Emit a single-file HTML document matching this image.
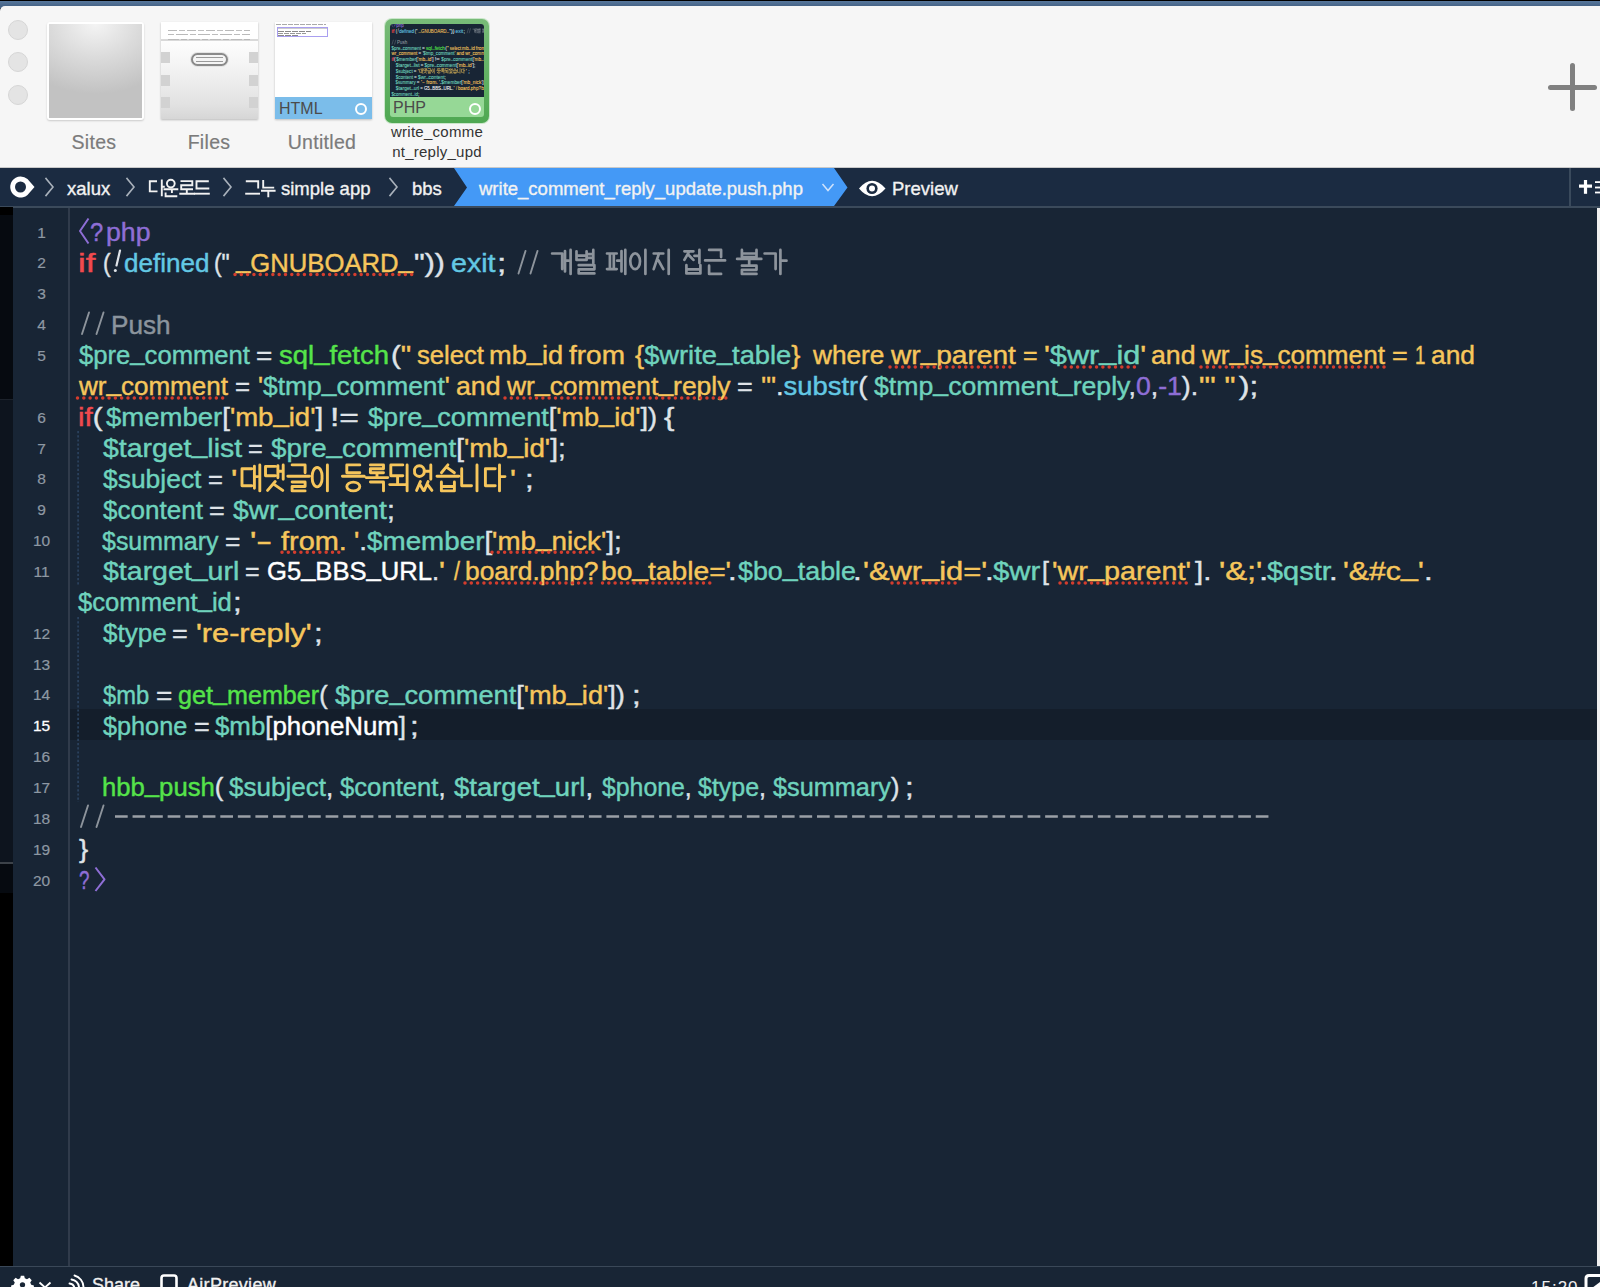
<!DOCTYPE html>
<html><head><meta charset="utf-8">
<style>
*{margin:0;padding:0;box-sizing:border-box}
html,body{width:1600px;height:1287px;overflow:hidden;background:#182535;font-family:"Liberation Sans",sans-serif}
.abs{position:absolute}
#wall{left:0;top:0;width:1600px;height:8px;background:linear-gradient(#000 0,#000 1px,#55759a 1.5px,#466487 6px)}
#tb{left:0;top:6px;width:1600px;height:162px;background:#f6f6f6;border-radius:5px 0 0 0;border-bottom:1px solid #c9c9c9}
.dot{width:20px;height:20px;border-radius:50%;background:#e4e4e4;border:1px solid #d6d6d6;left:8px}
.lbl{font-size:19.5px;color:#7b7b7b;-webkit-text-stroke:0.2px #7b7b7b;text-align:center;width:120px;line-height:22px;margin-top:2px;letter-spacing:0.3px}
#bc{left:0;top:168px;width:1600px;height:38px;background:#1b2b41}
#bcline{left:0;top:206px;width:1600px;height:1.5px;background:#3b4a5b}
.bct{color:#f2f2f2;font-size:18.5px;top:177.5px;white-space:nowrap;-webkit-text-stroke:0.35px #f2f2f2}
.chev{top:177px}
#left{left:0;top:207px;width:13px;height:1059px;background:#060a10}
#gut{left:13px;top:207.5px;width:56px;height:1059px;background:#182535}
#gline{left:68.3px;top:207.5px;width:1.7px;height:1059px;background:#303b4b}
#code{left:70px;top:207.5px;width:1527px;height:1059px;background:#182535}
#cur{left:70px;top:709px;width:1527px;height:31px;background:#141e2b}
#rstrip{left:1597px;top:208px;width:3px;height:1058px;background:#f0f0f0}
.ln{width:56px;text-align:center;left:13.5px;font-size:15.5px;color:#8a939e;line-height:15px;-webkit-text-stroke:0.2px currentColor}
.row{white-space:pre;font-size:25px;line-height:30px;transform-origin:0 50%;-webkit-text-stroke:0.42px currentColor}
.row span{-webkit-text-stroke:0.42px currentColor}
.us{font-style:normal;position:relative;top:-4px}
#sb{left:0;top:1266px;width:1600px;height:21px;background:#182535;border-top:1.5px solid #3a4858}
.pu{color:#8e6ed6}.rd{color:#f04a4e}.cy{color:#63c8e4}.yl{color:#f6c65c}.wh{color:#dfe3e8}
.gy{color:#8b949d}.tl{color:#6fd3bd}.gr{color:#55e34a}.bw{color:#ffffff}
</style></head><body>
<div id="wall" class="abs"></div>
<div id="tb" class="abs"></div>
<div class="abs dot" style="top:20px"></div>
<div class="abs dot" style="top:52px"></div>
<div class="abs dot" style="top:85px"></div>

<!-- Sites thumb -->
<div class="abs" style="left:47px;top:22px;width:97px;height:98px;background:#fff;border-radius:3px;box-shadow:0 1px 2px rgba(0,0,0,.18)"></div>
<div class="abs" style="left:49px;top:24px;width:93px;height:94px;background:radial-gradient(ellipse 90px 70px at 50% 0%,#f4f4f4 0%,#dadada 50%,#c2c2c2 100%)"></div>
<div class="abs lbl" style="left:34px;top:129px">Sites</div>
<!-- Files thumb -->
<div class="abs" style="left:161px;top:22px;width:97px;height:97px;background:linear-gradient(#fdfdfd 20%,#f4f4f4 45%,#e2e2e2 85%,#d6d6d6);box-shadow:0 1px 2px rgba(0,0,0,.25)"></div>
<div class="abs" style="left:161px;top:22px;width:97px;height:19px;background:#fff;border-bottom:2px solid #d9d9d9"></div>
<div class="abs" style="left:168px;top:29.5px;width:82px;height:1.3px;opacity:.8;background:repeating-linear-gradient(90deg,#a8a8a8 0 9px,transparent 9px 11px,#b0b0b0 11px 17px,transparent 17px 19px)"></div>
<div class="abs" style="left:168px;top:34px;width:82px;height:1.3px;opacity:.8;background:repeating-linear-gradient(90deg,#acacac 0 6px,transparent 6px 8px,#a8a8a8 8px 20px,transparent 20px 22px)"></div>
<div class="abs" style="left:168px;top:38.5px;width:82px;height:1.3px;opacity:.8;background:repeating-linear-gradient(90deg,#b4b4b4 0 11px,transparent 11px 13px,#b0b0b0 13px 19px,transparent 19px 21px)"></div>
<div class="abs" style="left:161px;top:52px;width:9px;height:11px;background:#d2d2d2"></div>
<div class="abs" style="left:161px;top:75px;width:9px;height:11px;background:#d2d2d2"></div>
<div class="abs" style="left:161px;top:97px;width:9px;height:11px;background:#d2d2d2"></div>
<div class="abs" style="left:249px;top:52px;width:9px;height:11px;background:#d2d2d2"></div>
<div class="abs" style="left:249px;top:75px;width:9px;height:11px;background:#d2d2d2"></div>
<div class="abs" style="left:249px;top:97px;width:9px;height:11px;background:#d2d2d2"></div>
<div class="abs" style="left:191px;top:53px;width:37px;height:13px;border-radius:7px;border:2px solid #8a8a8a;background:#f4f4f4;box-shadow:0 0 0 1px #e4e4e4"></div>
<div class="abs" style="left:196px;top:57px;width:27px;height:1px;background:#9a9a9a"></div>
<div class="abs" style="left:196px;top:61px;width:27px;height:1px;background:#9a9a9a"></div>
<div class="abs lbl" style="left:149px;top:129px">Files</div>
<!-- Untitled thumb -->
<div class="abs" style="left:275px;top:22px;width:97px;height:97px;background:#fff;box-shadow:0 1px 2px rgba(0,0,0,.22)"></div>
<div class="abs" style="left:276px;top:24px;width:50px;height:1px;background:repeating-linear-gradient(90deg,#aaa 0 5px,transparent 5px 6px)"></div>
<div class="abs" style="left:277px;top:27px;width:51px;height:10px;border:1px solid #a99ff0"></div>
<div class="abs" style="left:278px;top:28px;width:49px;height:1px;background:#ccc"></div>
<div class="abs" style="left:278px;top:30.5px;width:33px;height:1px;background:repeating-linear-gradient(90deg,#888 0 6px,transparent 6px 7px)"></div>
<div class="abs" style="left:278px;top:32.5px;width:28px;height:1px;background:repeating-linear-gradient(90deg,#999 0 5px,transparent 5px 6px)"></div>
<div class="abs" style="left:278px;top:34.5px;width:20px;height:1px;background:repeating-linear-gradient(90deg,#888 0 6px,transparent 6px 7px)"></div>
<div class="abs" style="left:275px;top:97px;width:97px;height:22px;background:#7bbdea"></div>
<div class="abs" style="left:279px;top:100px;font-size:16px;color:#4b4b4b;line-height:18px">HTML</div>
<div class="abs" style="left:355px;top:103px;width:12px;height:12px;border-radius:50%;border:2px solid #fff"></div>
<div class="abs lbl" style="left:262px;top:129px">Untitled</div>
<!-- PHP thumb -->
<div class="abs" style="left:384px;top:18px;width:106px;height:106px;border-radius:8px;background:rgba(120,200,120,.35)"></div>
<div class="abs" style="left:385px;top:19px;width:104px;height:104px;border-radius:7px;background:linear-gradient(#78bb78,#4fa852)"></div>
<div class="abs" style="left:390px;top:24px;width:94px;height:93px;border-radius:3px;background:#96d896;overflow:hidden">
  <div class="abs" style="left:0;top:0;width:94px;height:73px;background:#182535;overflow:hidden"><div class="abs" style="left:-12px;top:-41.9px;width:1600px;height:800px;transform:scale(0.172,0.186);transform-origin:0 0"><div class="abs row" style="left:89.65px;top:216.9px;transform:scaleX(0.9500)"><span class="pu">?</span></div>
<div class="abs row" style="left:106.43px;top:216.9px;transform:scaleX(1.0676)"><span class="pu">php</span></div>
<div class="abs row" style="left:77.62px;top:247.8px;transform:scaleX(1.3848)"><span class="rd">if</span></div>
<div class="abs row" style="left:103.09px;top:247.8px;transform:scaleX(0.9125)"><span class="wh">(</span></div>
<div class="abs row" style="left:124.46px;top:247.8px;transform:scaleX(1.0422)"><span class="cy">defined</span></div>
<div class="abs row" style="left:214.09px;top:247.8px;transform:scaleX(0.9135)"><span class="wh">(&quot;</span></div>
<div class="abs row" style="left:236.03px;top:247.8px;transform:scaleX(1.0266)"><span class="yl"><i class=us>_</i>GNUBOARD<i class=us>_</i></span></div>
<div class="abs row" style="left:413.79px;top:247.8px;transform:scaleX(1.2069)"><span class="wh">&quot;))</span></div>
<div class="abs row" style="left:451.35px;top:247.8px;transform:scaleX(1.1460)"><span class="cy">exit</span></div>
<div class="abs row" style="left:497.33px;top:247.8px;transform:scaleX(1.3333)"><span class="wh">;</span></div>
<div class="abs row" style="left:110.91px;top:309.5px;transform:scaleX(1.0448)"><span class="gy">Push</span></div>
<div class="abs row" style="left:79.00px;top:340.4px;transform:scaleX(1.0252)"><span class="tl">$pre<i class=us>_</i>comment</span></div>
<div class="abs row" style="left:256.38px;top:340.4px;transform:scaleX(1.1154)"><span class="wh">=</span></div>
<div class="abs row" style="left:279.00px;top:340.4px;transform:scaleX(1.0993)"><span class="gr">sql<i class=us>_</i>fetch</span></div>
<div class="abs row" style="left:390.83px;top:340.4px;transform:scaleX(1.1745)"><span class="wh">(</span><span class="yl">&quot;</span></div>
<div class="abs row" style="left:417.00px;top:340.4px;transform:scaleX(1.0251)"><span class="yl">select</span></div>
<div class="abs row" style="left:488.91px;top:340.4px;transform:scaleX(1.0878)"><span class="yl">mb<i class=us>_</i>id</span></div>
<div class="abs row" style="left:569.00px;top:340.4px;transform:scaleX(1.1185)"><span class="yl">from</span></div>
<div class="abs row" style="left:635.00px;top:340.4px;transform:scaleX(1.0916)"><span class="yl">{</span><span class="tl">$write<i class=us>_</i>table</span><span class="yl">}</span></div>
<div class="abs row" style="left:812.55px;top:340.4px;transform:scaleX(1.0486)"><span class="yl">where</span></div>
<div class="abs row" style="left:891.12px;top:340.4px;transform:scaleX(1.1228)"><span class="yl">wr<i class=us>_</i>parent</span></div>
<div class="abs row" style="left:1023.00px;top:340.4px;transform:scaleX(1.0000)"><span class="yl">=</span></div>
<div class="abs row" style="left:1043.77px;top:340.4px;transform:scaleX(1.2282)"><span class="yl">&#x27;</span><span class="tl">$wr<i class=us>_</i>id</span><span class="yl">&#x27;</span></div>
<div class="abs row" style="left:1151.43px;top:340.4px;transform:scaleX(1.0676)"><span class="yl">and</span></div>
<div class="abs row" style="left:1202.04px;top:340.4px;transform:scaleX(1.0448)"><span class="yl">wr<i class=us>_</i>is<i class=us>_</i>comment</span></div>
<div class="abs row" style="left:1391.92px;top:340.4px;transform:scaleX(1.0769)"><span class="yl">=</span></div>
<div class="abs row" style="left:1415.25px;top:340.4px;transform:scaleX(0.7500)"><span class="yl">1</span></div>
<div class="abs row" style="left:1430.94px;top:340.4px;transform:scaleX(1.0551)"><span class="yl">and</span></div>
<div class="abs row" style="left:79.04px;top:371.2px;transform:scaleX(1.0406)"><span class="yl">wr<i class=us>_</i>comment</span></div>
<div class="abs row" style="left:234.57px;top:371.2px;transform:scaleX(1.0308)"><span class="wh">=</span></div>
<div class="abs row" style="left:257.94px;top:371.2px;transform:scaleX(1.0552)"><span class="yl">&#x27;</span><span class="tl">$tmp<i class=us>_</i>comment</span><span class="yl">&#x27;</span></div>
<div class="abs row" style="left:456.43px;top:371.2px;transform:scaleX(1.0676)"><span class="yl">and</span></div>
<div class="abs row" style="left:507.06px;top:371.2px;transform:scaleX(1.0579)"><span class="yl">wr<i class=us>_</i>comment<i class=us>_</i>reply</span></div>
<div class="abs row" style="left:736.92px;top:371.2px;transform:scaleX(1.0769)"><span class="wh">=</span></div>
<div class="abs row" style="left:760.90px;top:371.2px;transform:scaleX(1.0965)"><span class="yl">&#x27;&quot;</span><span class="wh">.</span><span class="cy">substr</span><span class="wh">(</span></div>
<div class="abs row" style="left:874.00px;top:371.2px;transform:scaleX(1.0667)"><span class="tl">$tmp<i class=us>_</i>comment<i class=us>_</i>reply</span><span class="wh">,</span><span class="pu">0</span><span class="wh">,</span><span class="pu">-1</span><span class="wh">).</span></div>
<div class="abs row" style="left:1198.77px;top:371.2px;transform:scaleX(1.2322)"><span class="yl">&quot;&#x27; &quot;</span></div>
<div class="abs row" style="left:1238.97px;top:371.2px;transform:scaleX(1.2500)"><span class="wh">);</span></div>
<div class="abs row" style="left:77.83px;top:402.1px;transform:scaleX(1.1707)"><span class="rd">if</span><span class="wh">(</span></div>
<div class="abs row" style="left:106.00px;top:402.1px;transform:scaleX(1.1011)"><span class="tl">$member</span><span class="wh">[</span><span class="yl">&#x27;mb<i class=us>_</i>id&#x27;</span><span class="wh">]</span></div>
<div class="abs row" style="left:329.81px;top:402.1px;transform:scaleX(1.3459)"><span class="wh">!=</span></div>
<div class="abs row" style="left:367.50px;top:402.1px;transform:scaleX(1.0838)"><span class="tl">$pre<i class=us>_</i>comment</span><span class="wh">[</span><span class="yl">&#x27;mb<i class=us>_</i>id&#x27;</span><span class="wh">])</span></div>
<div class="abs row" style="left:664.00px;top:402.1px;transform:scaleX(1.2500)"><span class="wh">{</span></div>
<div class="abs row" style="left:102.50px;top:433.0px;transform:scaleX(1.1370)"><span class="tl">$target<i class=us>_</i>list</span></div>
<div class="abs row" style="left:248.39px;top:433.0px;transform:scaleX(1.0077)"><span class="wh">=</span></div>
<div class="abs row" style="left:270.60px;top:433.0px;transform:scaleX(1.1106)"><span class="tl">$pre<i class=us>_</i>comment</span><span class="wh">[</span><span class="yl">&#x27;mb<i class=us>_</i>id&#x27;</span><span class="wh">];</span></div>
<div class="abs row" style="left:102.50px;top:463.8px;transform:scaleX(1.0572)"><span class="tl">$subject</span></div>
<div class="abs row" style="left:207.73px;top:463.8px;transform:scaleX(1.0192)"><span class="wh">=</span></div>
<div class="abs row" style="left:230.67px;top:463.8px;transform:scaleX(1.3333)"><span class="yl">&#x27;</span></div>
<div class="abs row" style="left:509.88px;top:463.8px;transform:scaleX(1.2500)"><span class="yl">&#x27;</span></div>
<div class="abs row" style="left:525.12px;top:463.8px;transform:scaleX(1.2500)"><span class="wh">;</span></div>
<div class="abs row" style="left:102.50px;top:494.7px;transform:scaleX(1.0420)"><span class="tl">$content</span></div>
<div class="abs row" style="left:208.92px;top:494.7px;transform:scaleX(1.0769)"><span class="wh">=</span></div>
<div class="abs row" style="left:232.50px;top:494.7px;transform:scaleX(1.1297)"><span class="tl">$wr<i class=us>_</i>content</span><span class="wh">;</span></div>
<div class="abs row" style="left:102.00px;top:525.5px;transform:scaleX(0.9984)"><span class="tl">$summary</span></div>
<div class="abs row" style="left:224.75px;top:525.5px;transform:scaleX(1.0538)"><span class="wh">=</span></div>
<div class="abs row" style="left:249.67px;top:525.5px;transform:scaleX(1.3333)"><span class="yl">&#x27;</span></div>
<div class="abs row" style="left:256.46px;top:525.5px;transform:scaleX(1.9429)"><span class="yl">-</span></div>
<div class="abs row" style="left:280.80px;top:525.5px;transform:scaleX(1.1564)"><span class="yl">from.</span></div>
<div class="abs row" style="left:353.59px;top:525.5px;transform:scaleX(1.1113)"><span class="yl">&#x27;</span><span class="wh">.</span><span class="tl">$member</span><span class="wh">[</span><span class="yl">&#x27;mb<i class=us>_</i>nick&#x27;</span><span class="wh">];</span></div>
<div class="abs row" style="left:102.50px;top:556.4px;transform:scaleX(1.1402)"><span class="tl">$target<i class=us>_</i>url</span></div>
<div class="abs row" style="left:245.00px;top:556.4px;transform:scaleX(1.0000)"><span class="wh">=</span></div>
<div class="abs row" style="left:266.98px;top:556.4px;transform:scaleX(1.0230)"><span class="bw">G5<i class=us>_</i>BBS<i class=us>_</i>URL</span><span class="wh">.</span></div>
<div class="abs row" style="left:439.38px;top:556.4px;transform:scaleX(1.2500)"><span class="yl">&#x27;</span></div>
<div class="abs row" style="left:454.00px;top:556.4px;transform:scaleX(0.8571)"><span class="yl">/</span></div>
<div class="abs row" style="left:464.94px;top:556.4px;transform:scaleX(1.0554)"><span class="yl">board.php?</span></div>
<div class="abs row" style="left:600.87px;top:556.4px;transform:scaleX(1.1275)"><span class="yl">bo<i class=us>_</i>table=&#x27;</span></div>
<div class="abs row" style="left:728.12px;top:556.4px;transform:scaleX(1.2500)"><span class="wh">.</span></div>
<div class="abs row" style="left:738.00px;top:556.4px;transform:scaleX(1.0742)"><span class="tl">$bo<i class=us>_</i>table</span></div>
<div class="abs row" style="left:853.12px;top:556.4px;transform:scaleX(1.2500)"><span class="wh">.</span></div>
<div class="abs row" style="left:862.77px;top:556.4px;transform:scaleX(1.2350)"><span class="yl">&#x27;&amp;wr<i class=us>_</i>id=&#x27;</span></div>
<div class="abs row" style="left:985.12px;top:556.4px;transform:scaleX(1.2500)"><span class="wh">.</span></div>
<div class="abs row" style="left:993.00px;top:556.4px;transform:scaleX(1.1762)"><span class="tl">$wr</span></div>
<div class="abs row" style="left:1042.00px;top:556.4px;transform:scaleX(1.0000)"><span class="wh">[</span></div>
<div class="abs row" style="left:1051.85px;top:556.4px;transform:scaleX(1.1518)"><span class="yl">&#x27;wr<i class=us>_</i>parent&#x27;</span></div>
<div class="abs row" style="left:1195.00px;top:556.4px;transform:scaleX(1.1720)"><span class="wh">].</span></div>
<div class="abs row" style="left:1218.69px;top:556.4px;transform:scaleX(1.3060)"><span class="yl">&#x27;&amp;;&#x27;</span></div>
<div class="abs row" style="left:1259.33px;top:556.4px;transform:scaleX(1.3333)"><span class="wh">.</span></div>
<div class="abs row" style="left:1267.00px;top:556.4px;transform:scaleX(1.1583)"><span class="tl">$qstr</span></div>
<div class="abs row" style="left:1329.12px;top:556.4px;transform:scaleX(1.2500)"><span class="wh">.</span></div>
<div class="abs row" style="left:1342.79px;top:556.4px;transform:scaleX(1.2123)"><span class="yl">&#x27;&amp;#c<i class=us>_</i>&#x27;</span></div>
<div class="abs row" style="left:1424.12px;top:556.4px;transform:scaleX(1.2500)"><span class="wh">.</span></div>
<div class="abs row" style="left:78.40px;top:587.3px;transform:scaleX(1.0250)"><span class="tl">$comment<i class=us>_</i>id</span></div>
<div class="abs row" style="left:232.62px;top:587.3px;transform:scaleX(1.2500)"><span class="wh">;</span></div><svg class="abs" style="left:0;top:0" width="1600" height="1287" viewBox="0 0 1600 1287"><path d="M78.1 431V586M78.1 617V802" fill="none" stroke="#2c4461" stroke-width="1.6" stroke-dasharray="2.2 2"/><path d="M88.5 218.5 L80 231 L88.5 243.5 M95.5 867.5 L104.5 879.3 L95.5 891" fill="none" stroke="#8e6ed6" stroke-width="2" stroke-linejoin="round"/><path d="M525.5 251 L518.5 273.5 M537.5 251 L530.5 273.5 M89 312.5 L82 334 M103.5 312.5 L96.5 334 M88 805.5 L81 827 M103.5 805.5 L96.5 827" fill="none" stroke="#8d949c" stroke-width="1.9" stroke-linecap="round"/><path d="M120 250.5 L116.5 265.5" fill="none" stroke="#dfe3e8" stroke-width="2.2" stroke-linecap="round"/><circle cx="115.3" cy="270.5" r="1.5" fill="#dfe3e8"/><path d="M115.00 816.6h12.7M132.55 816.6h12.7M150.10 816.6h12.7M167.65 816.6h12.7M185.20 816.6h12.7M202.75 816.6h12.7M220.30 816.6h12.7M237.85 816.6h12.7M255.40 816.6h12.7M272.95 816.6h12.7M290.50 816.6h12.7M308.05 816.6h12.7M325.60 816.6h12.7M343.15 816.6h12.7M360.70 816.6h12.7M378.25 816.6h12.7M395.80 816.6h12.7M413.35 816.6h12.7M430.90 816.6h12.7M448.45 816.6h12.7M466.00 816.6h12.7M483.55 816.6h12.7M501.10 816.6h12.7M518.65 816.6h12.7M536.20 816.6h12.7M553.75 816.6h12.7M571.30 816.6h12.7M588.85 816.6h12.7M606.40 816.6h12.7M623.95 816.6h12.7M641.50 816.6h12.7M659.05 816.6h12.7M676.60 816.6h12.7M694.15 816.6h12.7M711.70 816.6h12.7M729.25 816.6h12.7M746.80 816.6h12.7M764.35 816.6h12.7M781.90 816.6h12.7M799.45 816.6h12.7M817.00 816.6h12.7M834.55 816.6h12.7M852.10 816.6h12.7M869.65 816.6h12.7M887.20 816.6h12.7M904.75 816.6h12.7M922.30 816.6h12.7M939.85 816.6h12.7M957.40 816.6h12.7M974.95 816.6h12.7M992.50 816.6h12.7M1010.05 816.6h12.7M1027.60 816.6h12.7M1045.15 816.6h12.7M1062.70 816.6h12.7M1080.25 816.6h12.7M1097.80 816.6h12.7M1115.35 816.6h12.7M1132.90 816.6h12.7M1150.45 816.6h12.7M1168.00 816.6h12.7M1185.55 816.6h12.7M1203.10 816.6h12.7M1220.65 816.6h12.7M1238.20 816.6h12.7M1255.75 816.6h12.7" stroke="#9aa0a6" stroke-width="2.5" fill="none"/><path d="M552.1 253.5 L562.2 253.5 L562.2 269.1M565.0 251.1 L565.0 271.5M565.0 260.7 L568.4 260.7M570.6 249.9 L570.6 273.9M576.5 251.3 L576.5 259.9 L586.6 259.9 L586.6 251.3M576.5 255.6 L586.6 255.6M593.3 249.9 L593.3 263.1M587.7 254.1 L593.3 254.1M587.7 257.8 L593.3 257.8M578.7 265.2 L594.4 265.2 L594.4 269.3 L578.7 269.3 L578.7 273.4 L594.4 273.4" fill="none" stroke="#8d949c" stroke-width="2.7" stroke-linecap="round" stroke-linejoin="round"/><path d="M607.0 253.5 L616.7 253.5M607.0 269.1 L616.7 269.1M609.9 253.5 L609.9 269.1M613.8 253.5 L613.8 269.1M621.5 251.1 L621.5 271.5M617.2 260.7 L621.5 260.7M625.3 249.9 L625.3 273.9M630.3 261.3A4.8 7.8 0 1 0 640.0 261.3A4.8 7.8 0 1 0 630.3 261.3M645.4 249.9 L645.4 273.9M653.7 253.5 L663.3 253.5M659.0 253.5 L653.7 269.1M658.5 260.5 L663.3 269.1M668.7 249.9 L668.7 273.9" fill="none" stroke="#8d949c" stroke-width="2.7" stroke-linecap="round" stroke-linejoin="round"/><path d="M684.4 251.3 L693.4 251.3M689.3 251.3 L684.4 259.9M688.9 255.2 L693.4 259.9M699.4 249.9 L699.4 263.1M694.4 255.8 L699.4 255.8M686.4 265.2 L686.4 273.4 L700.4 273.4 L700.4 265.2M686.4 269.3 L700.4 269.3M709.1 249.9 L721.1 249.9 L721.1 257.1M705.1 260.4 L725.1 260.4M709.1 265.7 L709.1 273.9 L721.1 273.9" fill="none" stroke="#8d949c" stroke-width="2.7" stroke-linecap="round" stroke-linejoin="round"/><path d="M741.9 249.9 L741.9 257.1 L756.5 257.1 L756.5 249.9M741.9 253.5 L756.5 253.5M737.1 258.9 L761.3 258.9M749.2 258.9 L749.2 264.3M741.9 265.7 L756.5 265.7 L756.5 269.8 L741.9 269.8 L741.9 273.9 L756.5 273.9M764.6 253.5 L775.6 253.5 L775.6 269.1M780.4 249.9 L780.4 273.9M780.4 260.7 L786.5 260.7" fill="none" stroke="#8d949c" stroke-width="2.7" stroke-linecap="round" stroke-linejoin="round"/><path d="M251.7 468.8 L242.0 468.8 L242.0 485.7 L251.7 485.7M254.4 466.2 L254.4 488.3M254.4 476.6 L257.6 476.6M259.8 464.9 L259.8 490.9M275.2 466.4 L265.5 466.4 L265.5 475.8 L275.2 475.8M277.9 465.6 L277.9 477.8M277.9 471.3 L281.1 471.3M283.2 464.9 L283.2 479.2M275.2 481.5 L267.6 490.4M274.4 484.6 L282.7 490.4M292.1 464.9 L305.1 464.9 L305.1 472.7M287.8 476.3 L309.4 476.3M292.1 482.0 L305.1 482.0 L305.1 486.5 L292.1 486.5 L292.1 490.9 L305.1 490.9M312.3 477.2A4.9 8.5 0 1 0 322.0 477.2A4.9 8.5 0 1 0 312.3 477.2M327.4 464.9 L327.4 490.9" fill="none" stroke="#f6c65c" stroke-width="2.9" stroke-linecap="round" stroke-linejoin="round"/><path d="M359.8 464.9 L346.8 464.9 L346.8 472.7 L359.8 472.7M342.4 476.3 L364.2 476.3M346.8 486.5A6.5 4.4 0 1 0 359.8 486.5A6.5 4.4 0 1 0 346.8 486.5M370.4 464.9 L383.5 464.9 L383.5 468.8 L370.4 468.8 L370.4 472.7 L383.5 472.7M377.0 473.4 L377.0 477.6M366.1 477.6 L387.8 477.6M370.4 482.0 L383.5 482.0 L383.5 490.9M402.8 464.9 L390.8 464.9 L390.8 475.8 L402.8 475.8M397.6 477.4 L397.6 484.6M389.7 484.6 L405.4 484.6M407.1 464.9 L407.1 490.9M414.5 471.1A4.9 4.7 0 1 0 424.2 471.1A4.9 4.7 0 1 0 414.5 471.1M430.8 464.9 L430.8 479.2M425.3 471.3 L430.8 471.3M420.4 481.5 L416.6 490.4M420.0 484.6 L423.5 490.4M428.1 481.5 L424.3 490.4M427.6 484.6 L431.9 490.4M447.9 464.9 L441.4 472.7M447.2 467.6 L454.4 472.7M437.0 476.3 L458.8 476.3M441.4 482.0 L441.4 490.9 L454.4 490.9 L454.4 482.0M441.4 486.5 L454.4 486.5M461.7 468.8 L461.7 485.7 L471.5 485.7M477.0 464.9 L477.0 490.9M495.2 468.8 L485.4 468.8 L485.4 485.7 L495.2 485.7M499.5 464.9 L499.5 490.9M499.5 476.6 L505.0 476.6" fill="none" stroke="#f6c65c" stroke-width="2.9" stroke-linecap="round" stroke-linejoin="round"/></svg></div></div>
  <div class="abs" style="left:3px;top:75px;font-size:16px;color:#4b4b4b;line-height:18px">PHP</div>
  <div class="abs" style="left:79px;top:79px;width:12px;height:12px;border-radius:50%;border:2px solid #fff"></div>
</div>
<div class="abs" style="left:377px;top:122px;width:120px;text-align:center;font-size:15px;line-height:20px;color:#333;letter-spacing:0.25px">write_comme<br>nt_reply_upd</div>
<!-- plus -->
<div class="abs" style="left:1569.5px;top:62.5px;width:5.6px;height:48.5px;border-radius:3px;background:#808080"></div>
<div class="abs" style="left:1548px;top:84.5px;width:48.5px;height:5.6px;border-radius:3px;background:#808080"></div>


<div id="bc" class="abs"></div>
<div id="bcline" class="abs"></div>

<!-- breadcrumb -->
<svg class="abs" style="left:0;top:168px" width="1600" height="38" viewBox="0 0 1600 38">
  <path d="M454 0 L834 0 L847.5 19.5 L834 38 L454 38 L467 19.5 Z" fill="#4499f6"/>
  <g fill="none" stroke="#a9b1bb" stroke-width="1.6" stroke-linecap="square">
    <path d="M46 10.5 L53 19 L46 27.5"/>
    <path d="M127 10.5 L134 19 L127 27.5"/>
    <path d="M224 10.5 L231 19 L224 27.5"/>
    <path d="M390 10.5 L397 19 L390 27.5"/>
  </g>
  <path d="M822.5 16 L828 22.5 L833.5 16" fill="none" stroke="#cfe2fb" stroke-width="1.5"/>
  <!-- site icon -->
  <path d="M20.5 8.5 A10.5 10.5 0 1 0 27.5 27 L34.5 19 L27.5 11 A10.5 10.5 0 0 0 20.5 8.5 Z" fill="#fff"/>
  <circle cx="20.5" cy="19" r="5.5" fill="#1b2b41"/>
  <!-- eye -->
  <path d="M859 20.5 Q872 5 885.5 20.5 Q872 36 859 20.5 Z" fill="#fff"/>
  <circle cx="872" cy="20.5" r="5.6" fill="#1b2b41"/>
  <circle cx="872" cy="20.5" r="3" fill="#fff"/>
  <rect x="1569" y="0" width="2" height="38" fill="#3a4a5c"/>
  <rect x="1579" y="16.5" width="13" height="3.2" fill="#fff"/>
  <rect x="1583.9" y="12" width="3.2" height="13.8" fill="#fff"/>
  <rect x="1595" y="13.2" width="6" height="1.8" fill="#fff"/>
  <rect x="1595" y="18.6" width="6" height="1.8" fill="#fff"/>
  <rect x="1595" y="23.6" width="6" height="1.8" fill="#fff"/>
</svg>
<div class="abs bct" style="left:67px">xalux</div>
<svg class="abs" style="left:0;top:0" width="300" height="210" viewBox="0 0 300 210"><g fill="none" stroke="#f2f2f2" stroke-width="1.9">
<path d="M157 181.2 H149.8 V191.4 H157.5"/><path d="M161.8 179.5 V196.3 M161.8 186.8 H164.8"/>
<circle cx="170.8" cy="183.6" r="3.9"/><path d="M163.5 189.2 H178.3 M171.9 189.2 V193 M165.6 192.6 V196.2 H177.3"/>
<path d="M180.5 181.1 H192.3 V185.2 H181.2 V189.3 H193"/><path d="M186.8 189.3 V193.7 M179.3 193.7 H195"/>
<path d="M208.8 181.2 H196.5 V188.5 H209.3"/><path d="M194.2 193.7 H209.8"/>
<path d="M245.8 181.2 H258.2 V188.6"/><path d="M245.2 193.7 H260"/>
<path d="M263.2 180 V187.6 H274.2"/><path d="M261 190.8 H275.6 M268.3 190.8 V197.2"/>
</g></svg>
<div class="abs bct" style="left:281px">simple app</div>
<div class="abs bct" style="left:412px">bbs</div>
<div class="abs bct" style="left:479px">write_comment_reply_update.push.php</div>
<div class="abs bct" style="left:892px">Preview</div>

<div id="left" class="abs"></div>
<div class="abs" style="left:0;top:207px;width:13px;height:7.5px;background:#000"></div>
<div class="abs" style="left:0;top:399px;width:13px;height:1px;background:#1c222b"></div>
<div class="abs" style="left:0;top:400px;width:13px;height:462px;background:#0d141e"></div>
<div class="abs" style="left:0;top:862px;width:13px;height:2px;background:#3c4249"></div>
<div class="abs" style="left:0;top:893px;width:13px;height:373px;background:#000"></div>
<div id="code" class="abs"></div>
<div id="gut" class="abs"></div>
<div id="gline" class="abs"></div>
<div id="cur" class="abs"></div>
<div id="rstrip" class="abs"></div>
<div id="sb" class="abs"></div>
<div class="abs ln" style="top:224.5px;color:#8e98a3">1</div>
<div class="abs ln" style="top:255.4px;color:#8e98a3">2</div>
<div class="abs ln" style="top:286.2px;color:#8e98a3">3</div>
<div class="abs ln" style="top:317.1px;color:#8e98a3">4</div>
<div class="abs ln" style="top:347.9px;color:#8e98a3">5</div>
<div class="abs ln" style="top:409.7px;color:#8e98a3">6</div>
<div class="abs ln" style="top:440.5px;color:#8e98a3">7</div>
<div class="abs ln" style="top:471.4px;color:#8e98a3">8</div>
<div class="abs ln" style="top:502.2px;color:#8e98a3">9</div>
<div class="abs ln" style="top:533.1px;color:#8e98a3">10</div>
<div class="abs ln" style="top:564.0px;color:#8e98a3">11</div>
<div class="abs ln" style="top:625.7px;color:#8e98a3">12</div>
<div class="abs ln" style="top:656.5px;color:#8e98a3">13</div>
<div class="abs ln" style="top:687.4px;color:#8e98a3">14</div>
<div class="abs ln" style="top:718.3px;color:#ffffff;-webkit-text-stroke:0.3px #fff">15</div>
<div class="abs ln" style="top:749.1px;color:#8e98a3">16</div>
<div class="abs ln" style="top:780.0px;color:#8e98a3">17</div>
<div class="abs ln" style="top:810.8px;color:#8e98a3">18</div>
<div class="abs ln" style="top:841.7px;color:#8e98a3">19</div>
<div class="abs ln" style="top:872.6px;color:#8e98a3">20</div>

<svg class="abs" style="left:0;top:1266px" width="1600" height="21" viewBox="0 0 1600 21">
  <g transform="translate(22.5 18.8) scale(0.83)">
    <path d="M-2 -11 h4 l0.8 3.2 l2.6 1.2 l2.9 -1.8 l2.8 2.8 l-1.8 2.9 l1.2 2.6 l3.2 0.8 v4 l-3.2 0.8 l-1.2 2.6 l1.8 2.9 l-2.8 2.8 l-2.9 -1.8 l-2.6 1.2 l-0.8 3.2 h-4 l-0.8 -3.2 l-2.6 -1.2 l-2.9 1.8 l-2.8 -2.8 l1.8 -2.9 l-1.2 -2.6 l-3.2 -0.8 v-4 l3.2 -0.8 l1.2 -2.6 l-1.8 -2.9 l2.8 -2.8 l2.9 1.8 l2.6 -1.2 Z" fill="#fff"/>
    <circle r="3.2" fill="#182535"/>
  </g>
  <path d="M39.5 16.5 L45 21.5 L50.5 16.5" fill="none" stroke="#fff" stroke-width="1.8"/>
  <g fill="none" stroke="#fff" stroke-width="1.9" stroke-linecap="round">
    <path d="M74.5 9.5 A12 12 0 0 1 83.5 21"/>
    <path d="M71.5 13.5 A9 9 0 0 1 79 21"/>
    <path d="M69.5 17.5 A5.5 5.5 0 0 1 74.5 22"/>
  </g>
  <rect x="161.5" y="9.5" width="15" height="20" rx="2.5" fill="none" stroke="#fff" stroke-width="2.6"/>
  <path d="M1586 30 V12.5 Q1586 9.5 1589 9.5 H1603" fill="none" stroke="#fff" stroke-width="3"/>
  <path d="M1592 22 L1600 16 V28 Z" fill="#fff"/>
</svg>
<div class="abs" style="left:92px;top:1275px;font-size:18px;line-height:20px;color:#f0f0f0;-webkit-text-stroke:0.3px #f0f0f0">Share</div>
<div class="abs" style="left:187px;top:1275px;font-size:18px;line-height:20px;color:#f0f0f0;letter-spacing:0.3px;-webkit-text-stroke:0.3px #f0f0f0">AirPreview</div>
<div class="abs" style="left:1531px;top:1278px;font-size:17px;line-height:20px;color:#f0f0f0;letter-spacing:1px">15:20</div>

<div class="abs row" style="left:89.65px;top:216.9px;transform:scaleX(0.9500)"><span class="pu">?</span></div>
<div class="abs row" style="left:106.43px;top:216.9px;transform:scaleX(1.0676)"><span class="pu">php</span></div>
<div class="abs row" style="left:77.62px;top:247.8px;transform:scaleX(1.3848)"><span class="rd">if</span></div>
<div class="abs row" style="left:103.09px;top:247.8px;transform:scaleX(0.9125)"><span class="wh">(</span></div>
<div class="abs row" style="left:124.46px;top:247.8px;transform:scaleX(1.0422)"><span class="cy">defined</span></div>
<div class="abs row" style="left:214.09px;top:247.8px;transform:scaleX(0.9135)"><span class="wh">(&quot;</span></div>
<div class="abs row" style="left:236.03px;top:247.8px;transform:scaleX(1.0266)"><span class="yl"><i class=us>_</i>GNUBOARD<i class=us>_</i></span></div>
<div class="abs row" style="left:413.79px;top:247.8px;transform:scaleX(1.2069)"><span class="wh">&quot;))</span></div>
<div class="abs row" style="left:451.35px;top:247.8px;transform:scaleX(1.1460)"><span class="cy">exit</span></div>
<div class="abs row" style="left:497.33px;top:247.8px;transform:scaleX(1.3333)"><span class="wh">;</span></div>
<div class="abs row" style="left:110.91px;top:309.5px;transform:scaleX(1.0448)"><span class="gy">Push</span></div>
<div class="abs row" style="left:79.00px;top:340.4px;transform:scaleX(1.0252)"><span class="tl">$pre<i class=us>_</i>comment</span></div>
<div class="abs row" style="left:256.38px;top:340.4px;transform:scaleX(1.1154)"><span class="wh">=</span></div>
<div class="abs row" style="left:279.00px;top:340.4px;transform:scaleX(1.0993)"><span class="gr">sql<i class=us>_</i>fetch</span></div>
<div class="abs row" style="left:390.83px;top:340.4px;transform:scaleX(1.1745)"><span class="wh">(</span><span class="yl">&quot;</span></div>
<div class="abs row" style="left:417.00px;top:340.4px;transform:scaleX(1.0251)"><span class="yl">select</span></div>
<div class="abs row" style="left:488.91px;top:340.4px;transform:scaleX(1.0878)"><span class="yl">mb<i class=us>_</i>id</span></div>
<div class="abs row" style="left:569.00px;top:340.4px;transform:scaleX(1.1185)"><span class="yl">from</span></div>
<div class="abs row" style="left:635.00px;top:340.4px;transform:scaleX(1.0916)"><span class="yl">{</span><span class="tl">$write<i class=us>_</i>table</span><span class="yl">}</span></div>
<div class="abs row" style="left:812.55px;top:340.4px;transform:scaleX(1.0486)"><span class="yl">where</span></div>
<div class="abs row" style="left:891.12px;top:340.4px;transform:scaleX(1.1228)"><span class="yl">wr<i class=us>_</i>parent</span></div>
<div class="abs row" style="left:1023.00px;top:340.4px;transform:scaleX(1.0000)"><span class="yl">=</span></div>
<div class="abs row" style="left:1043.77px;top:340.4px;transform:scaleX(1.2282)"><span class="yl">&#x27;</span><span class="tl">$wr<i class=us>_</i>id</span><span class="yl">&#x27;</span></div>
<div class="abs row" style="left:1151.43px;top:340.4px;transform:scaleX(1.0676)"><span class="yl">and</span></div>
<div class="abs row" style="left:1202.04px;top:340.4px;transform:scaleX(1.0448)"><span class="yl">wr<i class=us>_</i>is<i class=us>_</i>comment</span></div>
<div class="abs row" style="left:1391.92px;top:340.4px;transform:scaleX(1.0769)"><span class="yl">=</span></div>
<div class="abs row" style="left:1415.25px;top:340.4px;transform:scaleX(0.7500)"><span class="yl">1</span></div>
<div class="abs row" style="left:1430.94px;top:340.4px;transform:scaleX(1.0551)"><span class="yl">and</span></div>
<div class="abs row" style="left:79.04px;top:371.2px;transform:scaleX(1.0406)"><span class="yl">wr<i class=us>_</i>comment</span></div>
<div class="abs row" style="left:234.57px;top:371.2px;transform:scaleX(1.0308)"><span class="wh">=</span></div>
<div class="abs row" style="left:257.94px;top:371.2px;transform:scaleX(1.0552)"><span class="yl">&#x27;</span><span class="tl">$tmp<i class=us>_</i>comment</span><span class="yl">&#x27;</span></div>
<div class="abs row" style="left:456.43px;top:371.2px;transform:scaleX(1.0676)"><span class="yl">and</span></div>
<div class="abs row" style="left:507.06px;top:371.2px;transform:scaleX(1.0579)"><span class="yl">wr<i class=us>_</i>comment<i class=us>_</i>reply</span></div>
<div class="abs row" style="left:736.92px;top:371.2px;transform:scaleX(1.0769)"><span class="wh">=</span></div>
<div class="abs row" style="left:760.90px;top:371.2px;transform:scaleX(1.0965)"><span class="yl">&#x27;&quot;</span><span class="wh">.</span><span class="cy">substr</span><span class="wh">(</span></div>
<div class="abs row" style="left:874.00px;top:371.2px;transform:scaleX(1.0667)"><span class="tl">$tmp<i class=us>_</i>comment<i class=us>_</i>reply</span><span class="wh">,</span><span class="pu">0</span><span class="wh">,</span><span class="pu">-1</span><span class="wh">).</span></div>
<div class="abs row" style="left:1198.77px;top:371.2px;transform:scaleX(1.2322)"><span class="yl">&quot;&#x27; &quot;</span></div>
<div class="abs row" style="left:1238.97px;top:371.2px;transform:scaleX(1.2500)"><span class="wh">);</span></div>
<div class="abs row" style="left:77.83px;top:402.1px;transform:scaleX(1.1707)"><span class="rd">if</span><span class="wh">(</span></div>
<div class="abs row" style="left:106.00px;top:402.1px;transform:scaleX(1.1011)"><span class="tl">$member</span><span class="wh">[</span><span class="yl">&#x27;mb<i class=us>_</i>id&#x27;</span><span class="wh">]</span></div>
<div class="abs row" style="left:329.81px;top:402.1px;transform:scaleX(1.3459)"><span class="wh">!=</span></div>
<div class="abs row" style="left:367.50px;top:402.1px;transform:scaleX(1.0838)"><span class="tl">$pre<i class=us>_</i>comment</span><span class="wh">[</span><span class="yl">&#x27;mb<i class=us>_</i>id&#x27;</span><span class="wh">])</span></div>
<div class="abs row" style="left:664.00px;top:402.1px;transform:scaleX(1.2500)"><span class="wh">{</span></div>
<div class="abs row" style="left:102.50px;top:433.0px;transform:scaleX(1.1370)"><span class="tl">$target<i class=us>_</i>list</span></div>
<div class="abs row" style="left:248.39px;top:433.0px;transform:scaleX(1.0077)"><span class="wh">=</span></div>
<div class="abs row" style="left:270.60px;top:433.0px;transform:scaleX(1.1106)"><span class="tl">$pre<i class=us>_</i>comment</span><span class="wh">[</span><span class="yl">&#x27;mb<i class=us>_</i>id&#x27;</span><span class="wh">];</span></div>
<div class="abs row" style="left:102.50px;top:463.8px;transform:scaleX(1.0572)"><span class="tl">$subject</span></div>
<div class="abs row" style="left:207.73px;top:463.8px;transform:scaleX(1.0192)"><span class="wh">=</span></div>
<div class="abs row" style="left:230.67px;top:463.8px;transform:scaleX(1.3333)"><span class="yl">&#x27;</span></div>
<div class="abs row" style="left:509.88px;top:463.8px;transform:scaleX(1.2500)"><span class="yl">&#x27;</span></div>
<div class="abs row" style="left:525.12px;top:463.8px;transform:scaleX(1.2500)"><span class="wh">;</span></div>
<div class="abs row" style="left:102.50px;top:494.7px;transform:scaleX(1.0420)"><span class="tl">$content</span></div>
<div class="abs row" style="left:208.92px;top:494.7px;transform:scaleX(1.0769)"><span class="wh">=</span></div>
<div class="abs row" style="left:232.50px;top:494.7px;transform:scaleX(1.1297)"><span class="tl">$wr<i class=us>_</i>content</span><span class="wh">;</span></div>
<div class="abs row" style="left:102.00px;top:525.5px;transform:scaleX(0.9984)"><span class="tl">$summary</span></div>
<div class="abs row" style="left:224.75px;top:525.5px;transform:scaleX(1.0538)"><span class="wh">=</span></div>
<div class="abs row" style="left:249.67px;top:525.5px;transform:scaleX(1.3333)"><span class="yl">&#x27;</span></div>
<div class="abs row" style="left:256.46px;top:525.5px;transform:scaleX(1.9429)"><span class="yl">-</span></div>
<div class="abs row" style="left:280.80px;top:525.5px;transform:scaleX(1.1564)"><span class="yl">from.</span></div>
<div class="abs row" style="left:353.59px;top:525.5px;transform:scaleX(1.1113)"><span class="yl">&#x27;</span><span class="wh">.</span><span class="tl">$member</span><span class="wh">[</span><span class="yl">&#x27;mb<i class=us>_</i>nick&#x27;</span><span class="wh">];</span></div>
<div class="abs row" style="left:102.50px;top:556.4px;transform:scaleX(1.1402)"><span class="tl">$target<i class=us>_</i>url</span></div>
<div class="abs row" style="left:245.00px;top:556.4px;transform:scaleX(1.0000)"><span class="wh">=</span></div>
<div class="abs row" style="left:266.98px;top:556.4px;transform:scaleX(1.0230)"><span class="bw">G5<i class=us>_</i>BBS<i class=us>_</i>URL</span><span class="wh">.</span></div>
<div class="abs row" style="left:439.38px;top:556.4px;transform:scaleX(1.2500)"><span class="yl">&#x27;</span></div>
<div class="abs row" style="left:454.00px;top:556.4px;transform:scaleX(0.8571)"><span class="yl">/</span></div>
<div class="abs row" style="left:464.94px;top:556.4px;transform:scaleX(1.0554)"><span class="yl">board.php?</span></div>
<div class="abs row" style="left:600.87px;top:556.4px;transform:scaleX(1.1275)"><span class="yl">bo<i class=us>_</i>table=&#x27;</span></div>
<div class="abs row" style="left:728.12px;top:556.4px;transform:scaleX(1.2500)"><span class="wh">.</span></div>
<div class="abs row" style="left:738.00px;top:556.4px;transform:scaleX(1.0742)"><span class="tl">$bo<i class=us>_</i>table</span></div>
<div class="abs row" style="left:853.12px;top:556.4px;transform:scaleX(1.2500)"><span class="wh">.</span></div>
<div class="abs row" style="left:862.77px;top:556.4px;transform:scaleX(1.2350)"><span class="yl">&#x27;&amp;wr<i class=us>_</i>id=&#x27;</span></div>
<div class="abs row" style="left:985.12px;top:556.4px;transform:scaleX(1.2500)"><span class="wh">.</span></div>
<div class="abs row" style="left:993.00px;top:556.4px;transform:scaleX(1.1762)"><span class="tl">$wr</span></div>
<div class="abs row" style="left:1042.00px;top:556.4px;transform:scaleX(1.0000)"><span class="wh">[</span></div>
<div class="abs row" style="left:1051.85px;top:556.4px;transform:scaleX(1.1518)"><span class="yl">&#x27;wr<i class=us>_</i>parent&#x27;</span></div>
<div class="abs row" style="left:1195.00px;top:556.4px;transform:scaleX(1.1720)"><span class="wh">].</span></div>
<div class="abs row" style="left:1218.69px;top:556.4px;transform:scaleX(1.3060)"><span class="yl">&#x27;&amp;;&#x27;</span></div>
<div class="abs row" style="left:1259.33px;top:556.4px;transform:scaleX(1.3333)"><span class="wh">.</span></div>
<div class="abs row" style="left:1267.00px;top:556.4px;transform:scaleX(1.1583)"><span class="tl">$qstr</span></div>
<div class="abs row" style="left:1329.12px;top:556.4px;transform:scaleX(1.2500)"><span class="wh">.</span></div>
<div class="abs row" style="left:1342.79px;top:556.4px;transform:scaleX(1.2123)"><span class="yl">&#x27;&amp;#c<i class=us>_</i>&#x27;</span></div>
<div class="abs row" style="left:1424.12px;top:556.4px;transform:scaleX(1.2500)"><span class="wh">.</span></div>
<div class="abs row" style="left:78.40px;top:587.3px;transform:scaleX(1.0250)"><span class="tl">$comment<i class=us>_</i>id</span></div>
<div class="abs row" style="left:232.62px;top:587.3px;transform:scaleX(1.2500)"><span class="wh">;</span></div>
<div class="abs row" style="left:102.80px;top:618.1px;transform:scaleX(1.0423)"><span class="tl">$type</span></div>
<div class="abs row" style="left:171.92px;top:618.1px;transform:scaleX(1.0769)"><span class="wh">=</span></div>
<div class="abs row" style="left:196.27px;top:618.1px;transform:scaleX(1.2268)"><span class="yl">&#x27;re-reply&#x27;</span></div>
<div class="abs row" style="left:314.43px;top:618.1px;transform:scaleX(1.2500)"><span class="wh">;</span></div>
<div class="abs row" style="left:102.70px;top:679.8px;transform:scaleX(0.9491)"><span class="tl">$mb</span></div>
<div class="abs row" style="left:155.88px;top:679.8px;transform:scaleX(1.1154)"><span class="wh">=</span></div>
<div class="abs row" style="left:177.79px;top:679.8px;transform:scaleX(1.0058)"><span class="gr">get<i class=us>_</i>member</span><span class="wh">(</span></div>
<div class="abs row" style="left:334.70px;top:679.8px;transform:scaleX(1.0868)"><span class="tl">$pre<i class=us>_</i>comment</span><span class="wh">[</span><span class="yl">&#x27;mb<i class=us>_</i>id&#x27;</span><span class="wh">])</span></div>
<div class="abs row" style="left:632.48px;top:679.8px;transform:scaleX(1.2500)"><span class="wh">;</span></div>
<div class="abs row" style="left:102.70px;top:710.7px;transform:scaleX(1.0095)"><span class="tl">$phone</span></div>
<div class="abs row" style="left:193.92px;top:710.7px;transform:scaleX(1.0769)"><span class="wh">=</span></div>
<div class="abs row" style="left:215.00px;top:710.7px;transform:scaleX(1.0333)"><span class="tl">$mb</span><span class="wh">[</span><span class="bw">phoneNum</span><span class="wh">]</span></div>
<div class="abs row" style="left:409.62px;top:710.7px;transform:scaleX(1.2500)"><span class="wh">;</span></div>
<div class="abs row" style="left:101.97px;top:772.4px;transform:scaleX(1.0269)"><span class="gr">hbb<i class=us>_</i>push</span><span class="wh">(</span></div>
<div class="abs row" style="left:229.40px;top:772.4px;transform:scaleX(1.0406)"><span class="tl">$subject</span><span class="wh">,</span></div>
<div class="abs row" style="left:340.00px;top:772.4px;transform:scaleX(1.0267)"><span class="tl">$content</span><span class="wh">,</span></div>
<div class="abs row" style="left:453.70px;top:772.4px;transform:scaleX(1.0994)"><span class="tl">$target<i class=us>_</i>url</span><span class="wh">,</span></div>
<div class="abs row" style="left:602.00px;top:772.4px;transform:scaleX(0.9930)"><span class="tl">$phone</span><span class="wh">,</span></div>
<div class="abs row" style="left:698.40px;top:772.4px;transform:scaleX(0.9991)"><span class="tl">$type</span><span class="wh">,</span></div>
<div class="abs row" style="left:773.00px;top:772.4px;transform:scaleX(1.0106)"><span class="tl">$summary</span><span class="wh">)</span></div>
<div class="abs row" style="left:905.02px;top:772.4px;transform:scaleX(1.2500)"><span class="wh">;</span></div>
<div class="abs row" style="left:78.75px;top:834.1px;transform:scaleX(1.0938)"><span class="wh">}</span></div>
<div class="abs row" style="left:79.25px;top:865.0px;transform:scaleX(0.7500)"><span class="pu">?</span></div>
<svg class="abs" style="left:0;top:0" width="1600" height="1287" viewBox="0 0 1600 1287"><path d="M78.1 431V586M78.1 617V802" fill="none" stroke="#2c4461" stroke-width="1.6" stroke-dasharray="2.2 2"/><path d="M88.5 218.5 L80 231 L88.5 243.5 M95.5 867.5 L104.5 879.3 L95.5 891" fill="none" stroke="#8e6ed6" stroke-width="2" stroke-linejoin="round"/><path d="M525.5 251 L518.5 273.5 M537.5 251 L530.5 273.5 M89 312.5 L82 334 M103.5 312.5 L96.5 334 M88 805.5 L81 827 M103.5 805.5 L96.5 827" fill="none" stroke="#8d949c" stroke-width="1.9" stroke-linecap="round"/><path d="M120 250.5 L116.5 265.5" fill="none" stroke="#dfe3e8" stroke-width="2.2" stroke-linecap="round"/><circle cx="115.3" cy="270.5" r="1.5" fill="#dfe3e8"/><path d="M115.00 816.6h12.7M132.55 816.6h12.7M150.10 816.6h12.7M167.65 816.6h12.7M185.20 816.6h12.7M202.75 816.6h12.7M220.30 816.6h12.7M237.85 816.6h12.7M255.40 816.6h12.7M272.95 816.6h12.7M290.50 816.6h12.7M308.05 816.6h12.7M325.60 816.6h12.7M343.15 816.6h12.7M360.70 816.6h12.7M378.25 816.6h12.7M395.80 816.6h12.7M413.35 816.6h12.7M430.90 816.6h12.7M448.45 816.6h12.7M466.00 816.6h12.7M483.55 816.6h12.7M501.10 816.6h12.7M518.65 816.6h12.7M536.20 816.6h12.7M553.75 816.6h12.7M571.30 816.6h12.7M588.85 816.6h12.7M606.40 816.6h12.7M623.95 816.6h12.7M641.50 816.6h12.7M659.05 816.6h12.7M676.60 816.6h12.7M694.15 816.6h12.7M711.70 816.6h12.7M729.25 816.6h12.7M746.80 816.6h12.7M764.35 816.6h12.7M781.90 816.6h12.7M799.45 816.6h12.7M817.00 816.6h12.7M834.55 816.6h12.7M852.10 816.6h12.7M869.65 816.6h12.7M887.20 816.6h12.7M904.75 816.6h12.7M922.30 816.6h12.7M939.85 816.6h12.7M957.40 816.6h12.7M974.95 816.6h12.7M992.50 816.6h12.7M1010.05 816.6h12.7M1027.60 816.6h12.7M1045.15 816.6h12.7M1062.70 816.6h12.7M1080.25 816.6h12.7M1097.80 816.6h12.7M1115.35 816.6h12.7M1132.90 816.6h12.7M1150.45 816.6h12.7M1168.00 816.6h12.7M1185.55 816.6h12.7M1203.10 816.6h12.7M1220.65 816.6h12.7M1238.20 816.6h12.7M1255.75 816.6h12.7" stroke="#9aa0a6" stroke-width="2.5" fill="none"/><path d="M552.1 253.5 L562.2 253.5 L562.2 269.1M565.0 251.1 L565.0 271.5M565.0 260.7 L568.4 260.7M570.6 249.9 L570.6 273.9M576.5 251.3 L576.5 259.9 L586.6 259.9 L586.6 251.3M576.5 255.6 L586.6 255.6M593.3 249.9 L593.3 263.1M587.7 254.1 L593.3 254.1M587.7 257.8 L593.3 257.8M578.7 265.2 L594.4 265.2 L594.4 269.3 L578.7 269.3 L578.7 273.4 L594.4 273.4" fill="none" stroke="#8d949c" stroke-width="2.7" stroke-linecap="round" stroke-linejoin="round"/><path d="M607.0 253.5 L616.7 253.5M607.0 269.1 L616.7 269.1M609.9 253.5 L609.9 269.1M613.8 253.5 L613.8 269.1M621.5 251.1 L621.5 271.5M617.2 260.7 L621.5 260.7M625.3 249.9 L625.3 273.9M630.3 261.3A4.8 7.8 0 1 0 640.0 261.3A4.8 7.8 0 1 0 630.3 261.3M645.4 249.9 L645.4 273.9M653.7 253.5 L663.3 253.5M659.0 253.5 L653.7 269.1M658.5 260.5 L663.3 269.1M668.7 249.9 L668.7 273.9" fill="none" stroke="#8d949c" stroke-width="2.7" stroke-linecap="round" stroke-linejoin="round"/><path d="M684.4 251.3 L693.4 251.3M689.3 251.3 L684.4 259.9M688.9 255.2 L693.4 259.9M699.4 249.9 L699.4 263.1M694.4 255.8 L699.4 255.8M686.4 265.2 L686.4 273.4 L700.4 273.4 L700.4 265.2M686.4 269.3 L700.4 269.3M709.1 249.9 L721.1 249.9 L721.1 257.1M705.1 260.4 L725.1 260.4M709.1 265.7 L709.1 273.9 L721.1 273.9" fill="none" stroke="#8d949c" stroke-width="2.7" stroke-linecap="round" stroke-linejoin="round"/><path d="M741.9 249.9 L741.9 257.1 L756.5 257.1 L756.5 249.9M741.9 253.5 L756.5 253.5M737.1 258.9 L761.3 258.9M749.2 258.9 L749.2 264.3M741.9 265.7 L756.5 265.7 L756.5 269.8 L741.9 269.8 L741.9 273.9 L756.5 273.9M764.6 253.5 L775.6 253.5 L775.6 269.1M780.4 249.9 L780.4 273.9M780.4 260.7 L786.5 260.7" fill="none" stroke="#8d949c" stroke-width="2.7" stroke-linecap="round" stroke-linejoin="round"/><path d="M251.7 468.8 L242.0 468.8 L242.0 485.7 L251.7 485.7M254.4 466.2 L254.4 488.3M254.4 476.6 L257.6 476.6M259.8 464.9 L259.8 490.9M275.2 466.4 L265.5 466.4 L265.5 475.8 L275.2 475.8M277.9 465.6 L277.9 477.8M277.9 471.3 L281.1 471.3M283.2 464.9 L283.2 479.2M275.2 481.5 L267.6 490.4M274.4 484.6 L282.7 490.4M292.1 464.9 L305.1 464.9 L305.1 472.7M287.8 476.3 L309.4 476.3M292.1 482.0 L305.1 482.0 L305.1 486.5 L292.1 486.5 L292.1 490.9 L305.1 490.9M312.3 477.2A4.9 8.5 0 1 0 322.0 477.2A4.9 8.5 0 1 0 312.3 477.2M327.4 464.9 L327.4 490.9" fill="none" stroke="#f6c65c" stroke-width="2.9" stroke-linecap="round" stroke-linejoin="round"/><path d="M359.8 464.9 L346.8 464.9 L346.8 472.7 L359.8 472.7M342.4 476.3 L364.2 476.3M346.8 486.5A6.5 4.4 0 1 0 359.8 486.5A6.5 4.4 0 1 0 346.8 486.5M370.4 464.9 L383.5 464.9 L383.5 468.8 L370.4 468.8 L370.4 472.7 L383.5 472.7M377.0 473.4 L377.0 477.6M366.1 477.6 L387.8 477.6M370.4 482.0 L383.5 482.0 L383.5 490.9M402.8 464.9 L390.8 464.9 L390.8 475.8 L402.8 475.8M397.6 477.4 L397.6 484.6M389.7 484.6 L405.4 484.6M407.1 464.9 L407.1 490.9M414.5 471.1A4.9 4.7 0 1 0 424.2 471.1A4.9 4.7 0 1 0 414.5 471.1M430.8 464.9 L430.8 479.2M425.3 471.3 L430.8 471.3M420.4 481.5 L416.6 490.4M420.0 484.6 L423.5 490.4M428.1 481.5 L424.3 490.4M427.6 484.6 L431.9 490.4M447.9 464.9 L441.4 472.7M447.2 467.6 L454.4 472.7M437.0 476.3 L458.8 476.3M441.4 482.0 L441.4 490.9 L454.4 490.9 L454.4 482.0M441.4 486.5 L454.4 486.5M461.7 468.8 L461.7 485.7 L471.5 485.7M477.0 464.9 L477.0 490.9M495.2 468.8 L485.4 468.8 L485.4 485.7 L495.2 485.7M499.5 464.9 L499.5 490.9M499.5 476.6 L505.0 476.6" fill="none" stroke="#f6c65c" stroke-width="2.9" stroke-linecap="round" stroke-linejoin="round"/><path d="M235.0 274.5H414.0M890.0 367.0H1016.0M1065.0 367.0H1137.0M1201.0 367.0H1385.0M77.5 397.9H227.5M505.0 397.9H730.0M282.0 552.2H340.0M492.0 552.2H594.0M465.0 583.1H592.0M602.5 583.1H712.0M892.0 583.1H960.0M1060.0 583.1H1187.0" fill="none" stroke="#d43d2e" stroke-width="3.5" stroke-linecap="round" stroke-dasharray="0.01 6.3"/></svg>
</body></html>
